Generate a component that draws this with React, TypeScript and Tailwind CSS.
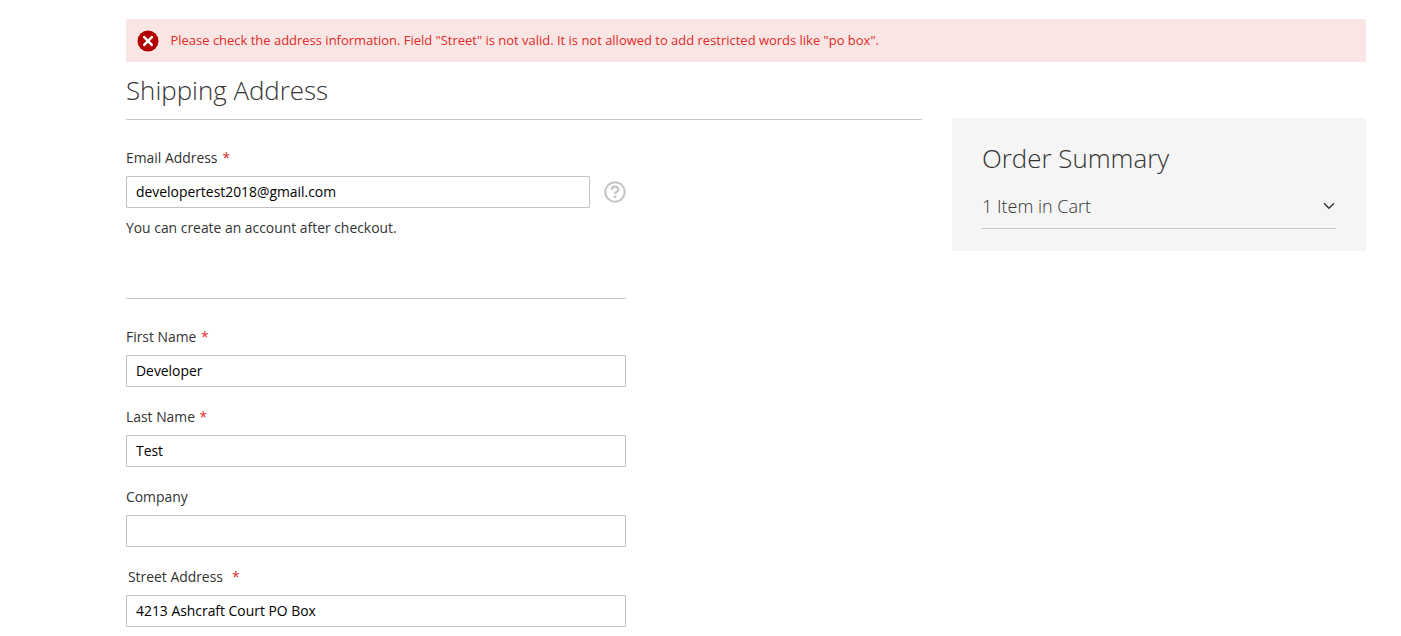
import React from "react";

function Field({ label, value, gap = "ml-[4.5px]", labelClass = "" }: { label: string; value: string; gap?: string; labelClass?: string }) {
  return (
    <div className="w-[500px]">
      <div className={`h-[19px] text-[13.9px] leading-[19px] text-[#333] ${labelClass}`}>
        {label}
        {gap && <span className={`${gap} text-[#e02b27]`}>*</span>}
      </div>
      <div className="mt-[9px] flex h-[32px] items-center rounded-[1px] border border-[#c2c2c2] bg-white px-[9px] text-[13.9px] leading-[20px] text-black">
        {value}
      </div>
    </div>
  );
}

export default function App() {
  return (
    <div className="h-[636px] overflow-hidden bg-white pl-[126px] pr-[35px] pt-[19px] font-['Open_Sans',sans-serif]">
      <div className="flex h-[43px] items-center bg-[#fae5e5] pl-[11px] text-[12.98px] text-[#e02b27]">
        <svg width="22" height="22" viewBox="0 0 22 22" className="mr-[11.5px] shrink-0">
          <circle cx="11" cy="11" r="10.5" fill="#b30000" />
          <path d="M7.2 7.2 14.8 14.8M14.8 7.2 7.2 14.8" stroke="#fff" strokeWidth="2.6" strokeLinecap="round" />
        </svg>
        <span>Please check the address information. Field "Street" is not valid. It is not allowed to add restricted words like "po box".</span>
      </div>
      <div className="flex justify-between">
        <div className="w-[796px]">
          <div className="flex h-[58px] items-center border-b border-[#c6c6c6] pb-[2px] text-[25.9px] font-light leading-[36px] text-[#333]">
            Shipping Address
          </div>
          <div className="mt-[28px] h-[19px] text-[13.9px] leading-[19px] text-[#333]">
            Email Address<span className="ml-[5px] text-[#e02b27]">*</span>
          </div>
          <div className="mt-[9px] flex items-center">
            <div className="flex h-[32px] w-[464px] items-center rounded-[1px] border border-[#c2c2c2] px-[9px] text-[13.9px] leading-[20px] text-black">
              developertest2018@gmail.com
            </div>
            <svg width="22" height="22" viewBox="0 0 22 22" className="ml-[14px]">
              <circle cx="11" cy="11" r="9.7" fill="none" stroke="#c4c4c4" strokeWidth="2" />
              <path d="M7.7 8.8C7.7 6.8 9.2 5.7 11 5.7c1.9 0 3.3 1.1 3.3 2.7 0 2.4-3.1 2.3-3.1 4.6" fill="none" stroke="#c4c4c4" strokeWidth="2.2" />
              <circle cx="11.1" cy="15.8" r="1.5" fill="#c4c4c4" />
            </svg>
          </div>
          <div className="mt-[10px] text-[13.9px] leading-[19px] text-[#333]">You can create an account after checkout.</div>
          <div className="mt-[61px] w-[500px] border-t border-[#c6c6c6]" />
          <div className="mt-[28px] flex flex-col gap-[20px]">
            <Field label="First Name" value="Developer" />
            <Field label="Last Name" value="Test" />
            <Field label="Company" value="" gap="" />
            <Field label="Street Address" value="4213 Ashcraft Court PO Box" gap="ml-[9px]" labelClass="pl-[2px]" />
          </div>
        </div>
        <div className="mt-[56px] h-[133px] w-[414px] bg-[#f5f5f5] px-[30px] pt-[22px]">
          <div className="text-[25.9px] font-light leading-[36px] text-[#333]">Order Summary</div>
          <div className="mt-[15px] flex h-[38px] items-start justify-between border-b border-[#c6c6c6] pr-[1px] pt-[3px] text-[18px] font-light leading-[24px] text-[#333]">
            <span>1 Item in Cart</span>
            <svg width="12" height="8" viewBox="0 0 12 8" className="mt-[8px]">
              <path d="M1 1.2 6 6.2 11 1.2" fill="none" stroke="#333" strokeWidth="1.4" />
            </svg>
          </div>
        </div>
      </div>
    </div>
  );
}
